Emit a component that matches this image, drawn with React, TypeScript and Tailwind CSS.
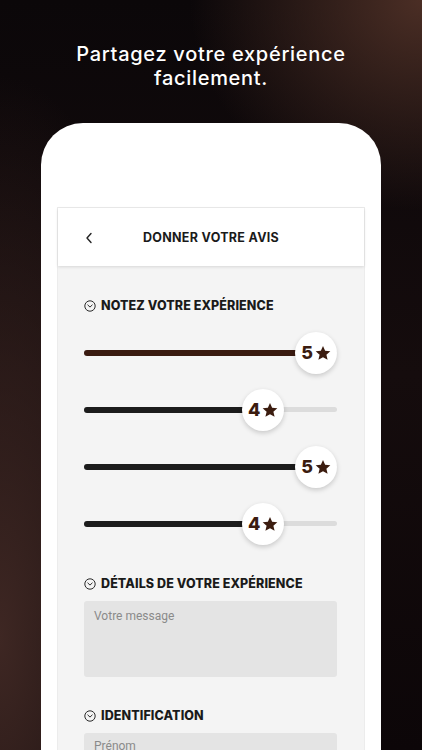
import React from "react";

const brown = "#3b1c0f";

function CircleChevron() {
  return (
    <svg width="12" height="12" viewBox="0 0 12 12" fill="none" className="shrink-0">
      <circle cx="6" cy="6" r="5.2" stroke="#2a2a2a" strokeWidth="1" />
      <polyline points="3.8,5 6,7.1 8.2,5" stroke="#2a2a2a" strokeWidth="1" fill="none" strokeLinecap="round" strokeLinejoin="round" />
    </svg>
  );
}

function Star() {
  return (
    <svg width="16" height="16" viewBox="0 0 24 24" className="shrink-0">
      <path
        d="M12 1.5l3.2 7.2 7.8.7-5.9 5.2 1.8 7.7L12 18.2l-6.9 4.1 1.8-7.7-5.9-5.2 7.8-.7z"
        fill={brown}
      />
    </svg>
  );
}

function SliderRow({ value, first }: { value: number; first?: boolean }) {
  const trackW = 253;
  const thumb = 42;
  const center = thumb / 2 + ((value - 1) / 4) * (trackW - thumb);
  return (
    <div className="relative h-[57px] w-[253px]">
      <div className="absolute left-0 right-0 top-[26px] h-[5px] rounded-full bg-[#dcdcdc]" />
      <div
        className={`absolute left-0 top-[25.5px] h-[6px] rounded-full ${first ? "bg-[#3a1b10]" : "bg-[#1c1c1c]"}`}
        style={{ width: center }}
      />
      <div
        className="absolute top-[7.5px] flex h-[42px] w-[42px] items-center justify-center gap-[2px] rounded-full bg-white shadow-[0_2px_5px_rgba(0,0,0,0.18)]"
        style={{ left: center - thumb / 2 }}
      >
        <span className="text-[18px] font-extrabold leading-none text-[#3b1c0f] [font-family:Inter,'DejaVu_Sans',sans-serif]">
          {value}
        </span>
        <Star />
      </div>
    </div>
  );
}

function SectionTitle({ children }: { children: React.ReactNode }) {
  return (
    <div className="flex h-[16px] items-center gap-[5px]">
      <CircleChevron />
      <span className="text-[12.5px] font-extrabold tracking-[0.1px] text-[#1a1a1a] [font-family:Inter,sans-serif]">
        {children}
      </span>
    </div>
  );
}

export default function App() {
  return (
    <div className="relative h-[750px] w-[422px] overflow-hidden bg-[radial-gradient(ellipse_55%_28%_at_100%_0%,#4b2e25_0%,rgba(75,46,37,0)_100%),radial-gradient(ellipse_45%_75%_at_0%_85%,#3e2723_0%,rgba(62,39,35,0)_100%),linear-gradient(180deg,#0b0709_0%,#150c0d_50%,#0c0608_100%)]">
      <div className="pt-[42px] text-center text-[20px] font-medium leading-[24px] tracking-[0.7px] text-white [font-family:Inter,sans-serif]">
        Partagez votre expérience
        <br />
        facilement.
      </div>
      <div className="ml-[41px] mt-[33px] h-[700px] w-[340px] rounded-t-[42px] bg-white px-[16px] pt-[84px]">
        <div className="h-full w-[308px] border border-[#ececec] bg-[#f4f4f4]">
          <div className="relative flex h-[58px] items-center justify-center bg-white pt-[3px] shadow-[0_1px_3px_rgba(0,0,0,0.12)]">
            <svg width="8" height="12" viewBox="0 0 8 12" className="absolute left-[27px] top-[24px]">
              <polyline points="6,1.5 2,6 6,10.5" stroke="#222" strokeWidth="1.4" fill="none" strokeLinecap="round" strokeLinejoin="round" />
            </svg>
            <span className="text-[12.5px] font-bold tracking-[0.3px] text-[#1a1a1a] [font-family:Inter,sans-serif]">
              DONNER VOTRE AVIS
            </span>
          </div>
          <div className="pl-[26px] pr-[27px] pt-[32px]">
            <SectionTitle>NOTEZ VOTRE EXPÉRIENCE</SectionTitle>
            <div className="mt-[10px] flex flex-col">
              <SliderRow value={5} first />
              <SliderRow value={4} />
              <SliderRow value={5} />
              <SliderRow value={4} />
            </div>
            <div className="mt-[24px]">
              <SectionTitle>DÉTAILS DE VOTRE EXPÉRIENCE</SectionTitle>
            </div>
            <div className="mt-[9px] h-[76px] w-[253px] rounded-[3px] bg-[#e4e4e4] px-[10px] pt-[6px] text-[12px] text-[#8a8a8a] [font-family:Roboto,sans-serif]">
              Votre message
            </div>
            <div className="mt-[31px]">
              <SectionTitle>IDENTIFICATION</SectionTitle>
            </div>
            <div className="mt-[9px] h-[40px] w-[253px] rounded-[3px] bg-[#e4e4e4] px-[10px] pt-[5px] text-[12px] leading-[16px] text-[#8a8a8a] [font-family:Roboto,sans-serif]">
              Prénom
            </div>
          </div>
        </div>
      </div>
    </div>
  );
}
